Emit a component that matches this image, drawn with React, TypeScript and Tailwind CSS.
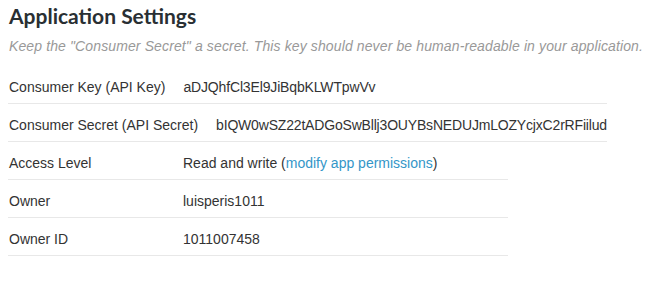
import React from "react";

const rowCls =
  "flex border-b border-[#e8e8e8] pt-[11px] pb-[6px] leading-[20px] whitespace-nowrap";
const labelCls = "min-w-[175px] pr-[18px] pl-px";

export default function App() {
  return (
    <div
      className="w-[672px] h-[292px] bg-white text-[#333333] pl-[8px] pt-[2px]"
      style={{ fontFamily: '"Liberation Sans", Arial, sans-serif' }}
    >
      <h1
        className="text-[21px] leading-[28px] font-bold text-[#292f33] pl-px"
        style={{ fontFamily: 'Lato, "Open Sans", sans-serif' }}
      >
        Application Settings
      </h1>
      <p className="mt-[7px] text-[14px] leading-[18px] italic text-[#999999] pl-px whitespace-nowrap tracking-[0.12px]">
        Keep the "Consumer Secret" a secret. This key should never be
        human-readable in your application.
      </p>
      <div className="mt-[11px] w-fit text-[14px]">
        <div className={rowCls}>
          <span className={labelCls}>Consumer Key (API Key)</span>
          <span className="tracking-[-0.15px]">aDJQhfCl3El9JiBqbKLWTpwVv</span>
        </div>
        <div className={rowCls}>
          <span className={labelCls}>Consumer Secret (API Secret)</span>
          <span className="tracking-[-0.18px]">
            bIQW0wSZ22tADGoSwBllj3OUYBsNEDUJmLOZYcjxC2rRFiilud
          </span>
        </div>
      </div>
      <div className="w-[500px] text-[14px]">
        <div className={rowCls}>
          <span className={labelCls}>Access Level</span>
          <span>
            Read and write (
            <a href="#" className="text-[#3396c8]">
              modify app permissions
            </a>
            )
          </span>
        </div>
        <div className={rowCls}>
          <span className={labelCls}>Owner</span>
          <span>luisperis1011</span>
        </div>
        <div className={rowCls}>
          <span className={labelCls}>Owner ID</span>
          <span>1011007458</span>
        </div>
      </div>
    </div>
  );
}
